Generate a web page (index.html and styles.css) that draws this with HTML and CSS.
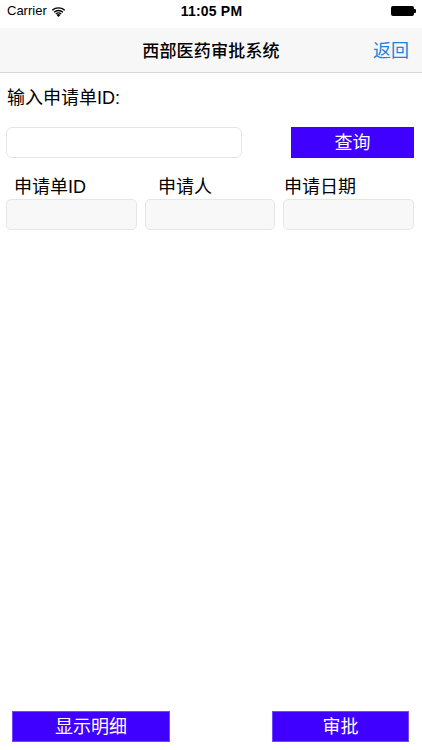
FILE: index.html
```html
<!DOCTYPE html>
<html lang="zh">
<head>
    <meta charset="UTF-8">
    <meta name="viewport" content="width=device-width, initial-scale=1.0">
    <title>西部医药审批系统</title>
    <link rel="stylesheet" href="styles.css">
</head>
<body>
    <div class="screen">
        <div class="status-bar">
            <div class="carrier">
                Carrier
                <svg class="wifi" width="13" height="10" viewBox="0 0 13 10">
                    <path d="M6.5 10 L4.6 7.9 A2.8 2.8 0 0 1 8.4 7.9 Z" fill="#000"/>
                    <path d="M3.4 6.6 A4.6 4.6 0 0 1 9.6 6.6 L8.8 7.5 A3.4 3.4 0 0 0 4.2 7.5 Z" fill="#000"/>
                    <path d="M1.6 4.7 A7.2 7.2 0 0 1 11.4 4.7 L10.5 5.7 A5.9 5.9 0 0 0 2.5 5.7 Z" fill="#000"/>
                    <path d="M-0.2 2.8 A9.8 9.8 0 0 1 13.2 2.8 L12.3 3.8 A8.5 8.5 0 0 0 0.7 3.8 Z" fill="#000"/>
                </svg>
            </div>
            <div class="time">11:05 PM</div>
            <div class="battery">
                <span class="battery-body"></span>
                <span class="battery-tip"></span>
            </div>
        </div>

        <div class="nav-bar">
            <h1 class="nav-title">西部医药审批系统</h1>
            <a class="nav-back" href="#">返回</a>
        </div>

        <div class="content">
            <p class="prompt">输入申请单ID:</p>

            <div class="search-row">
                <input class="id-input" type="text">
                <button class="btn btn-query">查询</button>
            </div>

            <div class="col-labels">
                <span class="col-label col-id">申请单ID</span>
                <span class="col-label col-person">申请人</span>
                <span class="col-label col-date">申请日期</span>
            </div>
            <div class="col-fields">
                <div class="field"></div>
                <div class="field"></div>
                <div class="field"></div>
            </div>
        </div>

        <div class="footer">
            <button class="btn btn-detail">显示明细</button>
            <button class="btn btn-approve">审批</button>
        </div>
    </div>
</body>
</html>
```

FILE: styles.css
```css
body {
    margin: 0;
    padding: 0;
    background: #fff;
    font-family: "Liberation Sans", "Noto Sans CJK SC", sans-serif;
    color: #000;
}

.screen {
    width: 422px;
    height: 750px;
    display: flex;
    flex-direction: column;
}

/* status bar */
.status-bar {
    height: 28px;
    display: flex;
    align-items: flex-start;
    justify-content: space-between;
    padding: 3px 6px 0 7px;
    box-sizing: border-box;
    font-size: 13px;
    line-height: 16px;
}

.carrier {
    width: 80px;
    display: flex;
    align-items: center;
    gap: 5px;
}

.wifi {
    margin-top: 1px;
}

.time {
    font-size: 14px;
    font-weight: bold;
    letter-spacing: 0.2px;
}

.battery {
    width: 80px;
    display: flex;
    justify-content: flex-end;
    align-items: center;
    height: 16px;
}

.battery-body {
    width: 23px;
    height: 10px;
    background: #000;
    border-radius: 2px;
}

.battery-tip {
    width: 2px;
    height: 4px;
    background: #000;
    border-radius: 0 1px 1px 0;
}

/* navigation */
.nav-bar {
    height: 44px;
    background: #f7f7f7;
    border-bottom: 1px solid #d6d6d6;
    display: flex;
    align-items: center;
    justify-content: center;
    position: relative;
}

.nav-title {
    margin: 0;
    font-family: "Noto Sans CJK SC", sans-serif;
    font-size: 17px;
    font-weight: 500;
    line-height: 22px;
    letter-spacing: 0.2px;
}

.nav-back {
    position: absolute;
    right: 13px;
    top: 12px;
    font-size: 18px;
    line-height: 22px;
    color: #1d82e0;
    text-decoration: none;
}

/* main content */
.content {
    flex: 1;
}

.prompt {
    margin: 14px 0 0 7px;
    font-size: 18px;
    line-height: 22px;
}

.search-row {
    display: flex;
    justify-content: space-between;
    padding: 0 8px 0 6px;
    margin-top: 18px;
}

.id-input {
    width: 236px;
    height: 31px;
    box-sizing: border-box;
    border: 1px solid #e4e4e4;
    border-radius: 6px;
    background: #fff;
    margin: 0;
}

.btn {
    height: 31px;
    margin: 0;
    padding: 0;
    border: 1px solid #6f4bff;
    background: #4000ff;
    color: #fff;
    font-family: "Liberation Sans", "Noto Sans CJK SC", sans-serif;
    font-size: 18px;
    line-height: 22px;
    cursor: pointer;
}

.btn-query {
    width: 123px;
    border-color: #4000ff;
}

.col-labels {
    display: grid;
    grid-template-columns: 131px 130px 131px;
    column-gap: 8px;
    padding: 0 8px 0 6px;
    margin-top: 18px;
    font-size: 18px;
    line-height: 22px;
}

.col-id {
    padding-left: 8px;
}

.col-person {
    padding-left: 13px;
}

.col-date {
    padding-left: 1px;
}

.col-fields {
    display: grid;
    grid-template-columns: 131px 130px 131px;
    column-gap: 8px;
    padding: 0 8px 0 6px;
    margin-top: 1px;
}

.field {
    height: 31px;
    box-sizing: border-box;
    background: #f8f8f8;
    border: 1px solid #e6e6e6;
    border-radius: 5px;
}

/* bottom buttons */
.footer {
    display: flex;
    justify-content: space-between;
    padding: 0 13px 8px 12px;
}

.btn-detail {
    width: 158px;
}

.btn-approve {
    width: 137px;
}
```
